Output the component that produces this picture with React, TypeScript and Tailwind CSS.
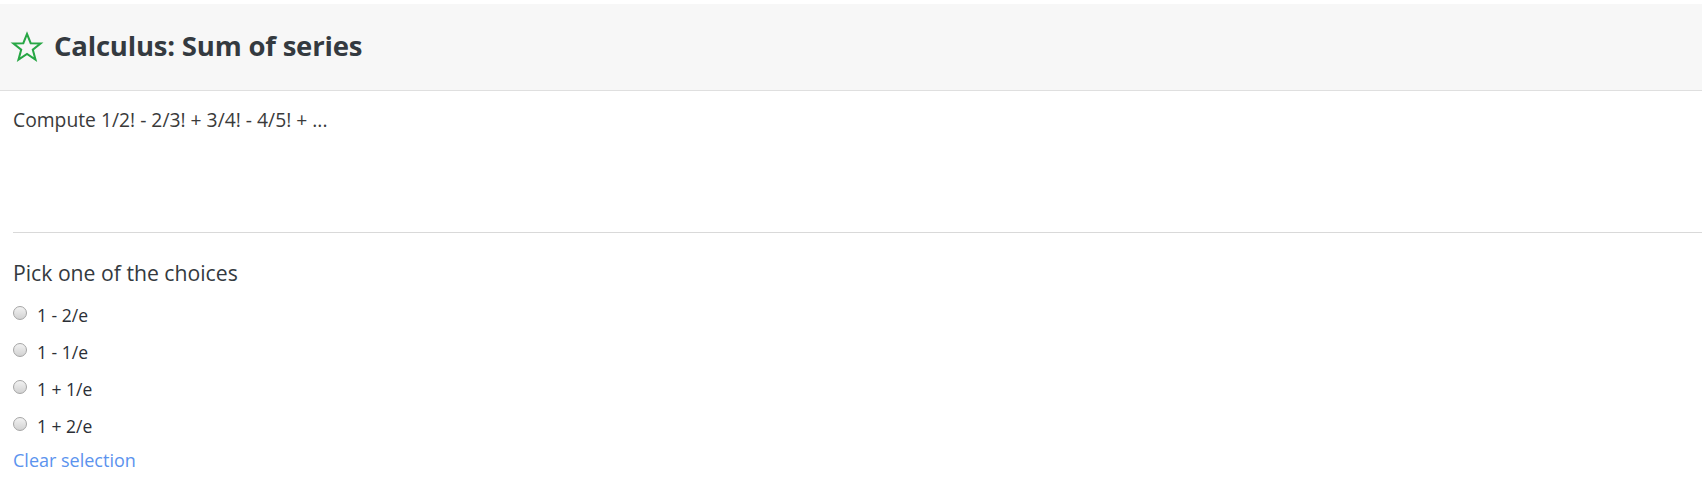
import React from "react";

const choices = ["1 - 2/e", "1 - 1/e", "1 + 1/e", "1 + 2/e"];

function StarIcon() {
  return (
    <svg width="34" height="34" viewBox="0 0 24 24" fill="none" stroke="#28a745" strokeWidth="1.45" strokeLinejoin="miter">
      <polygon points="12,2.8 14.6,9.3 21.6,9.5 16.1,13.9 18,20.9 12,16.9 6,20.9 7.9,13.9 2.4,9.5 9.4,9.3" />
    </svg>
  );
}

export default function App() {
  return (
    <div className="w-[1702px] h-[503px] bg-white pt-[4px] text-[#343a40]" style={{ fontFamily: '"Open Sans", "Noto Sans", sans-serif' }}>
      {/* Card header */}
      <div className="h-[87px] bg-[#f7f7f7] border-b border-[#dfdfdf] flex items-center pl-[10px] gap-[10px]">
        <StarIcon />
        <h3 className="text-[27.5px] font-bold leading-none tracking-[-0.2px] text-[#343a40] mb-[3px]">Calculus: Sum of series</h3>
      </div>

      {/* Card body */}
      <div className="pl-[13px]">
        <p className="h-[141px] pt-[15px] text-[19.3px] leading-[28px] text-[#3a3a3a]">Compute 1/2! - 2/3! + 3/4! - 4/5! + ...</p>
        <div className="border-t border-[#d9d9d9]" />
        <h5 className="mt-[26px] text-[21.2px] leading-[28px] font-medium text-[#343a40]">Pick one of the choices</h5>
        <div className="mt-[14px] flex flex-col gap-[9px]">
          {choices.map((c) => (
            <label key={c} className="flex items-center gap-[10px] h-[28px] text-[17.5px] font-medium text-[#2b2f36]">
              <span className="w-[14px] h-[14px] rounded-full border border-[#a5a5a5] bg-gradient-to-b from-[#f2f2f2] to-[#d2d2d2] -mt-[5px]" />
              {c}
            </label>
          ))}
        </div>
        <a className="block mt-[6px] text-[18px] leading-[28px] text-[#5b93ee]">Clear selection</a>
      </div>
    </div>
  );
}
